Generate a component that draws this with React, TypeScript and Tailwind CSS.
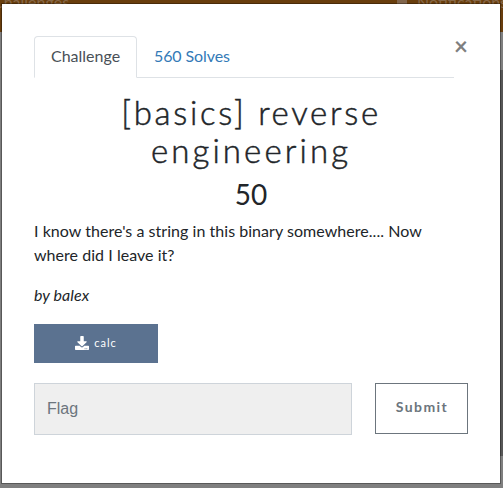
import { FaDownload } from "react-icons/fa";

function Backdrop() {
  return (
    <div className="h-full bg-[#7f7f7f]">
      <div className="relative h-8 overflow-hidden bg-[#693e0d] text-base leading-6 text-[#876848]">
        <span className="absolute -left-[7px] -top-[10px]">Challenges</span>
        <span className="absolute left-[397px] -top-2 h-3 w-2.5 bg-[#81664d]" />
        <span className="absolute left-[417px] -top-[10px]">Notifications</span>
      </div>
      <div className="ml-auto mt-[38px] h-[386px] w-1 bg-[#575757]" />
    </div>
  );
}

function Tabs() {
  return (
    <nav className="mr-[14px] flex h-[42px] border-b border-[#dee2e6]">
      <span className="h-[42px] w-[103px] rounded-t border border-b-white border-[#dee2e6] bg-white px-4 py-[7px] leading-6 text-[#495057]">
        Challenge
      </span>
      <span className="px-[17px] py-2 leading-6 tracking-[-0.1px] text-[#337ab7]">560 Solves</span>
    </nav>
  );
}

export default function App() {
  return (
    <div className="relative h-[488px] w-[503px] overflow-hidden font-['Lato',sans-serif] text-base text-[#212529]">
      <Backdrop />
      <main className="absolute left-px top-[3px] h-[481px] w-[500px] border border-black/30 bg-white bg-clip-padding px-8 pt-8">
        <button className="absolute right-[32px] top-[30px] text-2xl font-bold leading-6 text-[#7f7f7f]">×</button>
        <Tabs />
        <h2 className="mt-[15px] text-center text-[33px] font-light leading-[38.4px] [-webkit-text-stroke:0.5px_#212529]">
          <span className="block tracking-[2.7px]">[basics] reverse</span>
          <span className="block tracking-[3.1px]">engineering</span>
        </h2>
        <h3 className="mt-[2px] text-center text-[28px] leading-[45px]">50</h3>
        <p className="mt-[2px] leading-6 tracking-[0.04px]">
          I know there's a string in this binary somewhere.... Now
          <br />
          where did I leave it?
        </p>
        <p className="mt-4 italic leading-6 tracking-[0.08px]">by balex</p>
        <button className="mt-[17px] flex h-[39px] w-[124px] items-center justify-center gap-[5px] bg-[#5b7290] pb-px text-[11px] tracking-[1px] text-white">
          <FaDownload className="size-[14px]" />
          <span>calc</span>
        </button>
        <div className="mt-5 flex justify-between">
          <input
            aria-label="Flag"
            placeholder="Flag"
            className="h-[52px] w-[318px] border border-[#ced4da] bg-[#efefef] px-3 font-['Liberation_Sans',sans-serif] placeholder:text-[#6c757d]"
          />
          <button className="h-[51px] w-[93px] border border-[#6c757d] pb-[3px] pl-px text-sm font-bold tracking-[1.4px] text-[#6c757d]">
            Submit
          </button>
        </div>
      </main>
    </div>
  );
}
